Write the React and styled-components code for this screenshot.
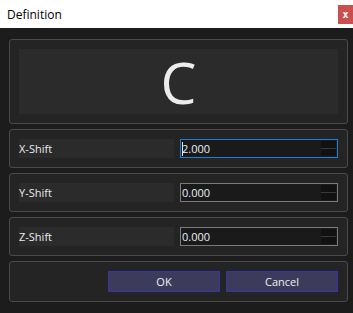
import styled, { createGlobalStyle } from 'styled-components'

const Global = createGlobalStyle`
  html, body { margin: 0; padding: 0; background: #1c1c1c; }
  * { box-sizing: border-box; }
`

const Window = styled.div`
  width: 353px;
  height: 313px;
  display: flex;
  flex-direction: column;
  background: #1c1c1c;
  font-family: "Open Sans", "Noto Sans", sans-serif;
  overflow: hidden;
`

const TitleBar = styled.div`
  height: 28px;
  flex: none;
  background: #ffffff;
  display: flex;
  align-items: center;
  justify-content: space-between;
  padding-left: 7px;
  font-size: 12px;
  color: #000;
`

const CloseButton = styled.div`
  width: 15px;
  height: 19px;
  background: #c9504f;
  color: #fff;
  font-family: "DejaVu Sans Mono", monospace;
  font-weight: bold;
  font-size: 10px;
  display: flex;
  align-items: center;
  justify-content: center;
`

const Body = styled.div`
  flex: 1;
  display: flex;
  flex-direction: column;
  gap: 5px;
  padding: 11px 5px 0 9px;
`

const Panel = styled.div`
  background: #242424;
  border: 1px solid #4a4a4a;
  border-radius: 3px;
  padding: 9px;
  display: flex;
  gap: 6px;
  justify-content: ${p => p.$end ? 'flex-end' : 'stretch'};
`

const Preview = styled.div`
  flex: 1;
  height: 65px;
  background: #2b2b2b;
  display: flex;
  align-items: center;
  justify-content: center;
  color: #ececec;
  font-family: "Open Sans", sans-serif;
  font-size: 57px;
  font-weight: 400;
  line-height: 1;
  padding-top: 2px;
`

const Label = styled.div`
  flex: 1;
  height: 19px;
  background: #2b2b2b;
  color: #eaeaea;
  font-size: 11px;
  display: flex;
  align-items: center;
`

const Input = styled.div`
  flex: 1;
  height: 19px;
  background: #1a1a1a;
  border: 1px solid ${p => p.$focused ? '#1a7fdb' : '#7a7a7a'};
  color: #e8eef5;
  font-size: 11px;
  display: flex;
  align-items: center;
  padding-left: 1px;
  position: relative;
`

const Caret = styled.span`
  display: inline-block;
  width: 1px;
  height: 14px;
  background: #e8e8e8;
  margin-right: -1px;
`

const Spin = styled.div`
  position: absolute;
  right: 1px;
  top: 1px;
  bottom: 1px;
  width: 15px;
  display: flex;
  flex-direction: column;
  gap: 1px;
  background: #3a3a3a;
`

const SpinHalf = styled.div`
  flex: 1;
  background: #111111;
`

const Button = styled.button`
  width: 112px;
  height: 21px;
  background: #3d3b5c;
  border: 1px solid #3734a8;
  color: #f0f0f0;
  font-family: "Open Sans", sans-serif;
  font-size: 11px;
  padding: 0;
`

const rows = [
  { label: 'X-Shift', value: '2.000', focused: true },
  { label: 'Y-Shift', value: '0.000' },
  { label: 'Z-Shift', value: '0.000' },
]

export default function App() {
  return (
    <Window>
      <Global />
      <TitleBar>
        Definition
        <CloseButton>x</CloseButton>
      </TitleBar>
      <Body>
        <Panel>
          <Preview>C</Preview>
        </Panel>
        {rows.map(r => (
          <Panel key={r.label}>
            <Label>{r.label}</Label>
            <Input $focused={r.focused}>
              {r.focused && <Caret />}
              {r.value}
              <Spin>
                <SpinHalf />
                <SpinHalf />
              </Spin>
            </Input>
          </Panel>
        ))}
        <Panel $end>
          <Button>OK</Button>
          <Button>Cancel</Button>
        </Panel>
      </Body>
    </Window>
  )
}
